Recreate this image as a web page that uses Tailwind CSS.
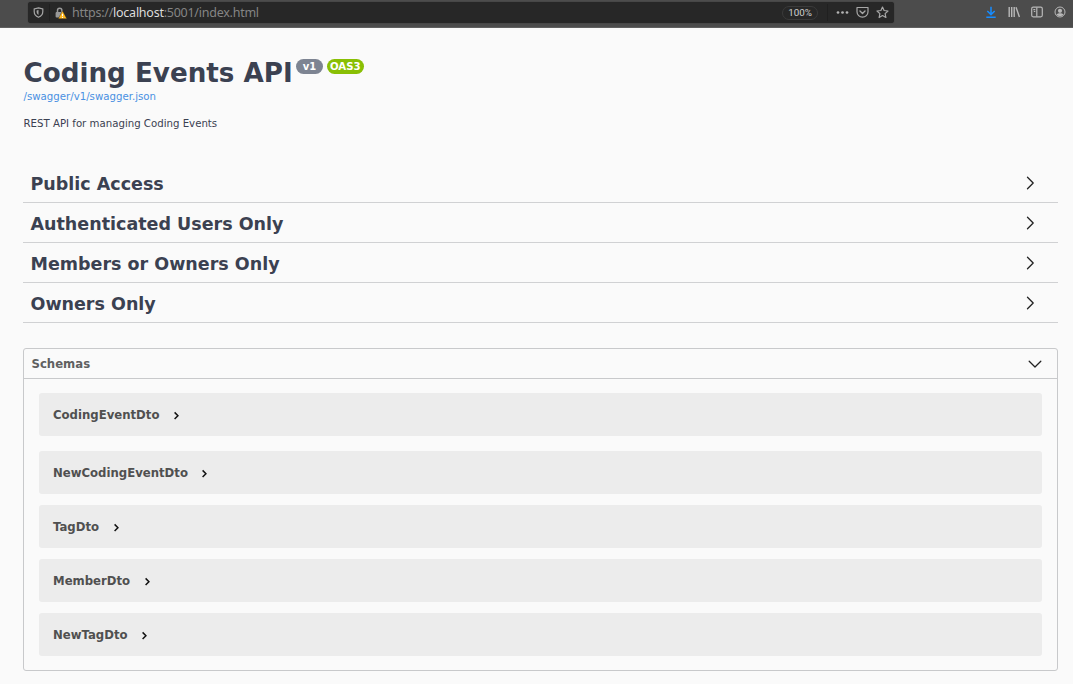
<!DOCTYPE html>
<html lang="en">
<head>
<meta charset="utf-8">
<title>Coding Events API</title>
<script src="https://cdn.jsdelivr.net/npm/@tailwindcss/browser@4"></script>
</head>
<body class="h-[684px] overflow-hidden bg-[#fafafa] font-['DejaVu_Sans',sans-serif] text-[#3b4151]">
<header class="flex h-7 items-start border-b border-[#606060] bg-[#4c4c4c] pl-7 text-[#b4b4b4]">
  <div class="mt-0.5 flex h-[21px] w-[866px] shrink-0 items-center rounded-[3px] bg-[#272727] shadow-[0_0_1px_#222]">
    <svg class="ml-[5px] size-[11px] shrink-0" viewBox="0 0 11 11" fill="none" stroke="#a6a6a6" stroke-width="1.2"><path d="M5.500.8 9.800 2v2.500c0 3-1.800 4.800-4.300 5.800C3 9.300 1.200 7.500 1.200 4.500V2z"/><path d="M5.500 3v5C4.200 7.200 3.600 6 3.600 4.500v-1z" fill="#a6a6a6" stroke="none"/></svg>
    <div class="ml-[5px] h-[17px] w-px bg-[#202020]"></div>
    <svg class="ml-[5px] h-3 w-3 shrink-0" viewBox="0 0 12 12"><path d="M2.500 6V3.500a2.200 2.200 0 0 1 4.400 0V6" fill="none" stroke="#999" stroke-width="1.500"/><rect x=".6" y="5" width="7.500" height="5.500" rx="1" fill="#999"/><path d="m7.500 3.800 4.300 7.900H3.300z" fill="#ffb91f" stroke="#272727" stroke-width=".4"/><path d="M7.500 6.800v2.400M7.500 10v1" stroke="#fff" stroke-width="1"/></svg>
    <div class="ml-[5px] whitespace-nowrap font-['Noto_Sans',sans-serif] text-[12.5px] leading-[20px] tracking-[-0.25px] text-[#858585]">https://<span class="text-[#dcdcdc]">localhost</span>:5001/index.html</div>
    <div class="ml-auto flex h-[14px] w-9 items-center justify-center rounded-full border border-[#3a3a3a] pt-px font-['Roboto',sans-serif] text-[9.8px] text-[#d0d0d0]">100%</div>
    <div class="ml-[9px] h-[17px] w-px bg-[#202020]"></div>
    <svg class="ml-2 h-[13px] w-[13px]" viewBox="0 0 13 13" fill="#b4b4b4"><circle cx="2" cy="6.500" r="1.350"/><circle cx="6.500" cy="6.500" r="1.350"/><circle cx="11" cy="6.500" r="1.350"/></svg>
    <svg class="ml-[7px] size-[13px]" viewBox="0 0 13 13" fill="none" stroke="#a8a8a8" stroke-width="1.200" stroke-linecap="round" stroke-linejoin="round"><path d="M1 1.500h11v4.200a5.500 5.500 0 0 1-11 0z"/><path d="m4 5 2.500 2.400L9 5" stroke-width="1.400"/></svg>
    <svg class="ml-[7px] mr-[5px] size-[13px]" viewBox="0 0 13 13" fill="none" stroke="#a8a8a8" stroke-width="1.200" stroke-linejoin="round"><path d="m6.500 1 1.600 3.500 3.900.5-2.900 2.600.8 3.900-3.400-1.900-3.400 1.900.8-3.900L1 5l3.900-.5z"/></svg>
  </div>
  <div class="ml-auto mr-[7px] flex items-center gap-[11px] pt-[6px]">
    <svg class="size-[12px]" viewBox="0 0 12 12" fill="none" stroke="#168cff" stroke-width="1.500"><path d="M6 .8v7.700M2.300 5 6 8.600 9.700 5M1.300 11.300h9.400"/></svg>
    <svg class="size-[12px]" viewBox="0 0 12 12" fill="none" stroke="#b8b8b8" stroke-width="1.400"><path d="M1.200 1v10M3.700 1v10M6.200 1v10M8 1.200l3.400 9.800"/></svg>
    <svg class="size-[12px]" viewBox="0 0 12 12" fill="none" stroke="#b8b8b8" stroke-width="1.200"><rect x=".7" y="1.200" width="10.600" height="9.600" rx="1.500"/><path d="M5.800 1.500v9M2.300 3.600h2M2.800 5.500h1.500"/></svg>
    <svg class="size-[12px]" viewBox="0 0 12 12"><circle cx="6" cy="6" r="5" fill="none" stroke="#b8b8b8" stroke-width="1"/><circle cx="6" cy="4.800" r="2.100" fill="#b8b8b8"/><path d="M2.500 8.500C4 6.800 8 6.800 9.500 8.500 8 10.500 4 10.500 2.500 8.500z" fill="#b8b8b8"/></svg>
  </div>
</header>
<main class="pl-[23px] pr-[15px]">
  <section class="h-[134px] pt-[30px]">
    <div class="flex h-8 items-start">
      <h1 class="w-[270px] whitespace-nowrap pl-[0.500px] text-[26.2px] font-bold leading-[31px]">Coding Events API</h1>
      <span class="ml-[3px] mt-px flex h-[15px] w-[27px] items-center justify-center rounded-full bg-[#7d8492] text-[10px] font-bold text-white">v1</span>
      <span class="ml-1 mt-px flex h-[15px] w-[36.500px] items-center justify-center rounded-full bg-[#89bf04] text-[10.2px] font-bold text-white">OAS3</span>
    </div>
    <a class="block pl-[0.500px] text-[10.2px] leading-[14px] text-[#4990e2]">/swagger/v1/swagger.json</a>
    <p class="mt-[13px] pl-[0.500px] text-[10.2px] leading-[14px]">REST API for managing Coding Events</p>
  </section>
  <section class="pt-px text-[17.5px] font-bold">
    <div class="flex h-10 items-center justify-between border-b border-[#d0d1d3] pl-[7.500px] pr-[21px]"><h2 class="pt-[3px]">Public Access</h2><svg class="size-[14px]" viewBox="0 0 14 14" fill="none" stroke="#222" stroke-width="1.300" stroke-linecap="round" stroke-linejoin="round"><path d="m4.500 1.200 5.700 5.800-5.700 5.800"/></svg></div>
    <div class="flex h-10 items-center justify-between border-b border-[#d0d1d3] pl-[7.500px] pr-[21px]"><h2 class="pt-[3px]">Authenticated Users Only</h2><svg class="size-[14px]" viewBox="0 0 14 14" fill="none" stroke="#222" stroke-width="1.300" stroke-linecap="round" stroke-linejoin="round"><path d="m4.500 1.200 5.700 5.800-5.700 5.800"/></svg></div>
    <div class="flex h-10 items-center justify-between border-b border-[#d0d1d3] pl-[7.500px] pr-[21px]"><h2 class="pt-[3px]">Members or Owners Only</h2><svg class="size-[14px]" viewBox="0 0 14 14" fill="none" stroke="#222" stroke-width="1.300" stroke-linecap="round" stroke-linejoin="round"><path d="m4.500 1.200 5.700 5.800-5.700 5.800"/></svg></div>
    <div class="flex h-10 items-center justify-between border-b border-[#d0d1d3] pl-[7.500px] pr-[21px]"><h2 class="pt-[3px]">Owners Only</h2><svg class="size-[14px]" viewBox="0 0 14 14" fill="none" stroke="#222" stroke-width="1.300" stroke-linecap="round" stroke-linejoin="round"><path d="m4.500 1.200 5.700 5.800-5.700 5.800"/></svg></div>
  </section>
  <section class="mt-[25px] h-[323px] rounded-[3px] border border-[#c8c9cb] text-[11.7px] font-bold">
    <div class="flex h-[30px] items-center justify-between border-b border-[#c8c9cb] pl-[7.500px] pr-[15px] text-[#606060]"><h3 class="pt-[2px]">Schemas</h3><svg class="size-[14px]" viewBox="0 0 14 14" fill="none" stroke="#222" stroke-width="1.300" stroke-linecap="round" stroke-linejoin="round"><path d="m1.200 4.300 5.800 5.700 5.800-5.700"/></svg></div>
    <div class="flex flex-col gap-[11px] px-[15px] pt-[14px] text-[#505050]">
      <div class="mb-1 flex h-[43px] items-center gap-[13.500px] rounded-[3px] bg-[#ececec] pl-[14px]"><span class="pt-[2px]">CodingEventDto</span><svg class="mt-[2px] h-[9px] w-[7px]" viewBox="0 0 7 9" fill="none" stroke="#111" stroke-width="1.500"><path d="m1.600 1.400 3.300 3.300L1.600 8"/></svg></div>
      <div class="flex h-[43px] items-center gap-[13.500px] rounded-[3px] bg-[#ececec] pl-[14px]"><span class="pt-[2px]">NewCodingEventDto</span><svg class="mt-[2px] h-[9px] w-[7px]" viewBox="0 0 7 9" fill="none" stroke="#111" stroke-width="1.500"><path d="m1.600 1.400 3.300 3.300L1.600 8"/></svg></div>
      <div class="flex h-[43px] items-center gap-[13.500px] rounded-[3px] bg-[#ececec] pl-[14px]"><span class="pt-[2px]">TagDto</span><svg class="mt-[2px] h-[9px] w-[7px]" viewBox="0 0 7 9" fill="none" stroke="#111" stroke-width="1.500"><path d="m1.600 1.400 3.300 3.300L1.600 8"/></svg></div>
      <div class="flex h-[43px] items-center gap-[13.500px] rounded-[3px] bg-[#ececec] pl-[14px]"><span class="pt-[2px]">MemberDto</span><svg class="mt-[2px] h-[9px] w-[7px]" viewBox="0 0 7 9" fill="none" stroke="#111" stroke-width="1.500"><path d="m1.600 1.400 3.300 3.300L1.600 8"/></svg></div>
      <div class="flex h-[43px] items-center gap-[13.500px] rounded-[3px] bg-[#ececec] pl-[14px]"><span class="pt-[2px]">NewTagDto</span><svg class="mt-[2px] h-[9px] w-[7px]" viewBox="0 0 7 9" fill="none" stroke="#111" stroke-width="1.500"><path d="m1.600 1.400 3.300 3.300L1.600 8"/></svg></div>
    </div>
  </section>
</main>
</body>
</html>
